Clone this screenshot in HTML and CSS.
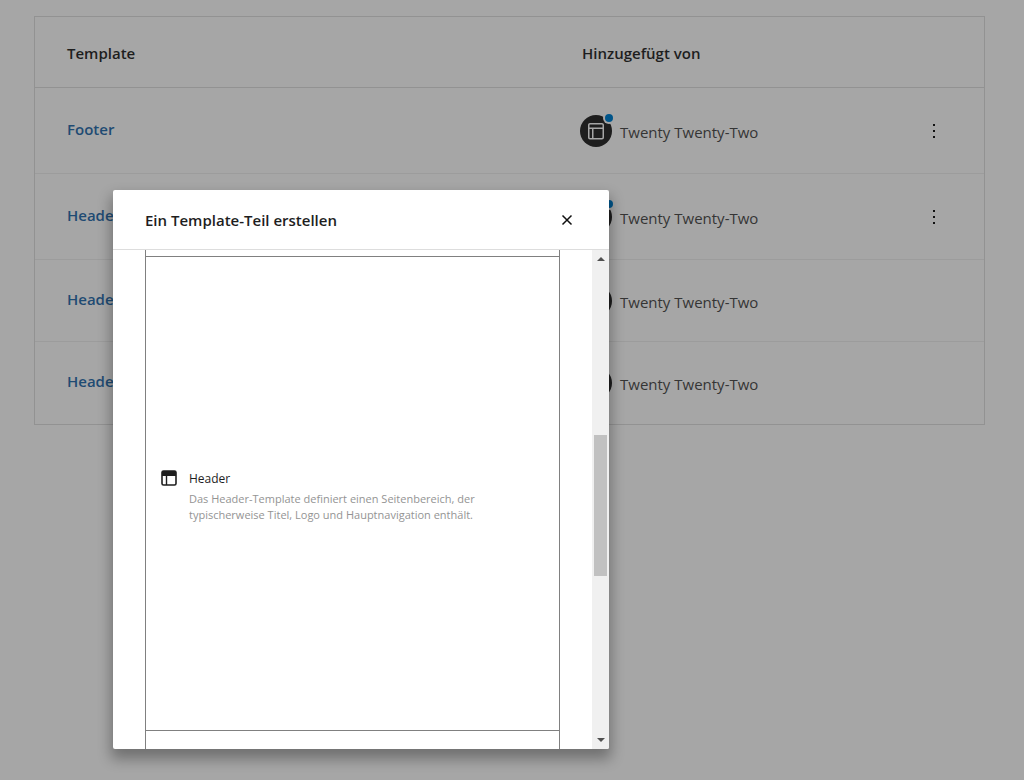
FILE: index.html
```html
<!DOCTYPE html>
<html lang="de">
<head>
<meta charset="utf-8">
<title>Template-Teile</title>
<link rel="stylesheet" href="styles.css">
</head>
<body>
<svg class="sprite" aria-hidden="true">
  <symbol id="layout" viewBox="0 0 24 24"><path fill="currentColor" d="M18 4H6c-1.100 0-2 .9-2 2v12.500c0 1.100.9 2 2 2h12c1.100 0 2-.9 2-2V6c0-1.100-.9-2-2-2zM6 5.500h12c.3 0 .5.200.5.500v2.500h-13V6c0-.3.200-.5.500-.5zm-.5 13V10H8v9H6c-.3 0-.5-.2-.5-.5zm12.500.5H9.500v-9h9v8.500c0 .3-.2.500-.5.500z"/></symbol>
  <symbol id="dots" viewBox="0 0 24 24"><path fill="currentColor" d="M11 5h2v2h-2zM11 11h2v2h-2zM11 17h2v2h-2z"/></symbol>
</svg>
<main class="page">
  <table class="list">
    <thead>
      <tr><th class="col-name">Template</th><th class="col-theme">Hinzugefügt von</th><th class="col-actions" aria-label="Aktionen"></th></tr>
    </thead>
    <tbody>
      <tr class="row-custom">
        <td><a class="name" href="#footer">Footer</a></td>
        <td><div class="added"><span class="avatar customized"><svg class="avatar-icon"><use href="#layout"/></svg></span><span class="theme">Twenty Twenty-Two</span></div></td>
        <td><button class="more" type="button" aria-label="Aktionen"><svg class="more-icon"><use href="#dots"/></svg></button></td>
      </tr>
      <tr class="row-custom">
        <td><a class="name" href="#header">Header</a></td>
        <td><div class="added"><span class="avatar customized"><svg class="avatar-icon"><use href="#layout"/></svg></span><span class="theme">Twenty Twenty-Two</span></div></td>
        <td><button class="more" type="button" aria-label="Aktionen"><svg class="more-icon"><use href="#dots"/></svg></button></td>
      </tr>
      <tr>
        <td><a class="name" href="#header-2">Header</a></td>
        <td><div class="added"><span class="avatar"><svg class="avatar-icon"><use href="#layout"/></svg></span><span class="theme">Twenty Twenty-Two</span></div></td>
        <td></td>
      </tr>
      <tr>
        <td><a class="name" href="#header-3">Header</a></td>
        <td><div class="added"><span class="avatar"><svg class="avatar-icon"><use href="#layout"/></svg></span><span class="theme">Twenty Twenty-Two</span></div></td>
        <td></td>
      </tr>
    </tbody>
  </table>
</main>
<div class="overlay">
  <section class="modal" role="dialog" aria-labelledby="modal-title">
    <header class="modal-header">
      <h1 class="modal-title" id="modal-title">Ein Template-Teil erstellen</h1>
      <button class="close" type="button" aria-label="Schließen"><svg class="close-icon" viewBox="0 0 12 12"><path d="M1.500 1.500l9 9M10.500 1.500l-9 9" fill="none" stroke="currentColor" stroke-width="1.500"/></svg></button>
    </header>
    <div class="modal-body">
      <div class="options">
        <div class="option-edge"></div>
        <label class="option" for="area-header">
          <input class="option-input" type="radio" name="area" id="area-header">
          <svg class="option-icon" viewBox="0 0 16 16"><rect x="1" y="1" width="14" height="14" rx="1.500" fill="none" stroke="currentColor" stroke-width="1.600"/><path d="M1 1h14v5H1z" fill="currentColor"/><path d="M5.500 6v9" stroke="currentColor" stroke-width="1.400"/></svg>
          <span class="option-text"><span class="option-name">Header</span><span class="option-info">Das Header-Template definiert einen Seitenbereich, der typischerweise Titel, Logo und Hauptnavigation enthält.</span></span>
        </label>
        <div class="option-rest"></div>
      </div>
      <div class="scrollbar" aria-hidden="true">
        <svg class="arrow" viewBox="0 0 8 4"><path d="M0 4l4-4 4 4z" fill="currentColor"/></svg>
        <div class="track"><div class="thumb"></div></div>
        <svg class="arrow" viewBox="0 0 8 4"><path d="M0 0l4 4 4-4z" fill="currentColor"/></svg>
      </div>
    </div>
  </section>
</div>
</body>
</html>
```
FILE: styles.css
```css
* { box-sizing: border-box; }
body {
  margin: 0;
  background: #a6a6a6;
  color: #1e1e1e;
  font: 15px/20px "Open Sans", "Noto Sans", sans-serif;
}
button { padding: 0; border: 0; background: none; color: inherit; font: inherit; }
.sprite { display: none; }
.page { padding: 16px 39px 0 34px; }
.list {
  width: 100%;
  table-layout: fixed;
  border: 1px solid #929292;
  border-spacing: 0;
}
.list th {
  height: 71px;
  padding: 2px 0 0;
  border-bottom: 1px solid #929292;
  font-size: 15px;
  font-weight: 600;
  text-align: left;
}
.list td { height: 82px; padding: 0; border-bottom: 1px solid #9c9c9c; }
.list .row-custom td { height: 86px; }
.list tr:last-child td { border-bottom: 0; }
.list th:first-child, .list td:first-child { padding-left: 32px; }
.col-theme { width: 312px; }
.list .col-theme { padding-left: 2px; }
.col-actions { width: 92px; }
.name {
  display: inline-block;
  padding-bottom: 4px;
  color: #1f4b73;
  font-weight: 600;
  text-decoration: none;
}
.added {
  display: flex;
  align-items: center;
  gap: 8px;
  color: #353535;
}
.theme { padding-top: 2px; }
.avatar {
  position: relative;
  display: grid;
  place-items: center;
  width: 32px;
  height: 32px;
  border-radius: 50%;
  background: #1e1e1e;
  color: #a6a6a6;
}
.avatar-icon { width: 24px; height: 24px; }
.customized::after {
  content: "";
  position: absolute;
  top: -3px;
  right: -3px;
  width: 8px;
  height: 8px;
  margin: 2px;
  border-radius: 50%;
  background: #00558a;
  box-shadow: 0 0 0 2px #a6a6a6;
}
.more { display: block; width: 24px; height: 24px; margin-left: 30px; }
.more-icon { display: block; width: 24px; height: 24px; color: #111; }
.overlay { position: absolute; top: 190px; left: 113px; }
.modal {
  display: flex;
  flex-direction: column;
  width: 496px;
  height: 559px;
  border-radius: 2px;
  background: #fff;
  box-shadow: 0 8px 14px 2px rgba(0, 0, 0, 0.32);
  overflow: hidden;
}
.modal-header {
  display: flex;
  align-items: center;
  justify-content: space-between;
  height: 60px;
  padding: 0 36px 0 32px;
  border-bottom: 1px solid #ddd;
}
.modal-title { margin: 0; font-size: 15px; font-weight: 600; line-height: 20px; }
.close { width: 12px; height: 12px; }
.close-icon { display: block; width: 12px; height: 12px; color: #111; }
.modal-body { display: flex; flex: 1; min-height: 0; }
.options {
  display: flex;
  flex: 1;
  flex-direction: column;
  margin: 0 32px;
  border: solid #808080;
  border-width: 0 1px;
}
.option-edge { height: 6px; }
.option {
  display: flex;
  align-items: center;
  flex: 1;
  gap: 12px;
  padding: 4px 60px 0 15px;
  border: solid #808080;
  border-width: 1px 0;
}
.option-rest { height: 18px; }
.option-input { position: absolute; opacity: 0; }
.option-icon { flex: none; width: 16px; height: 16px; margin-bottom: 36px; }
.option-text { display: flex; flex-direction: column; }
.option-name { font-size: 12px; line-height: 20px; margin-bottom: 2px; }
.option-info { color: #949494; font-size: 11px; line-height: 16px; }
.scrollbar {
  display: flex;
  flex-direction: column;
  align-items: center;
  width: 17px;
  padding: 7px 0;
  background: #f0f0f0;
  color: #505050;
}
.arrow { width: 8px; height: 4px; }
.track { flex: 1; width: 13px; padding-top: 174px; }
.thumb { height: 141px; background: #c1c1c1; }
```
